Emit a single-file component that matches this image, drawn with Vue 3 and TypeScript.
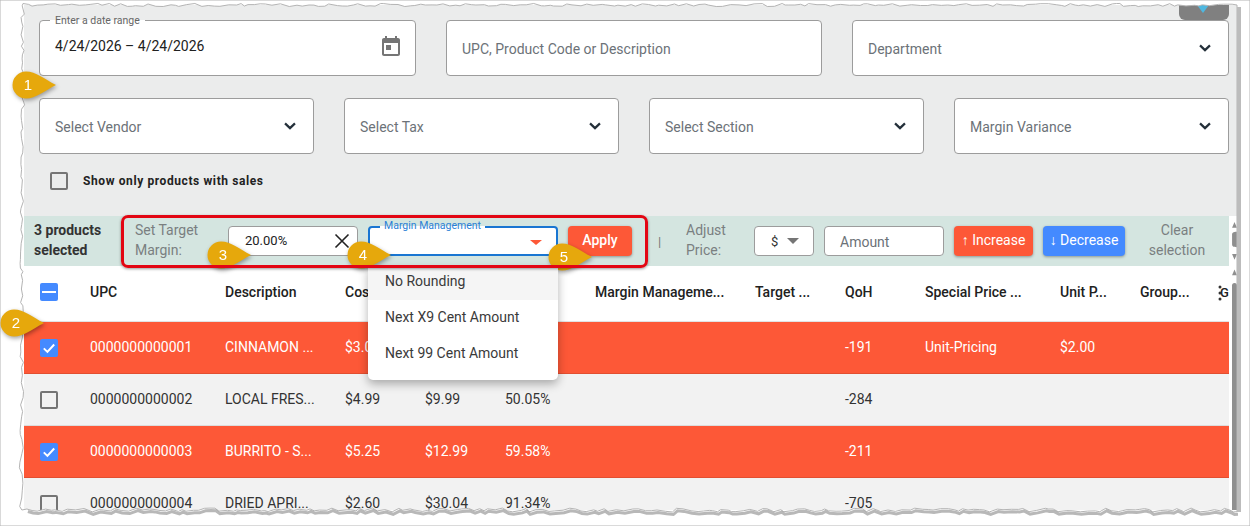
<script setup lang="ts">
interface Row {
  upc: string
  desc: string
  cost: string
  retail: string
  margin: string
  qoh: string
  special: string
  unit: string
  checked: boolean
}

const rows: Row[] = [
  { upc: '0000000000001', desc: 'CINNAMON ...', cost: '$3.00', retail: '', margin: '', qoh: '-191', special: 'Unit-Pricing', unit: '$2.00', checked: true },
  { upc: '0000000000002', desc: 'LOCAL FRES...', cost: '$4.99', retail: '$9.99', margin: '50.05%', qoh: '-284', special: '', unit: '', checked: false },
  { upc: '0000000000003', desc: 'BURRITO - S...', cost: '$5.25', retail: '$12.99', margin: '59.58%', qoh: '-211', special: '', unit: '', checked: true },
  { upc: '0000000000004', desc: 'DRIED APRI...', cost: '$2.60', retail: '$30.04', margin: '91.34%', qoh: '-705', special: '', unit: '', checked: false },
]

const vendorFilters = ['Select Vendor', 'Select Tax', 'Select Section', 'Margin Variance']
const roundingOptions = ['No Rounding', 'Next X9 Cent Amount', 'Next 99 Cent Amount']

const callouts = [
  { n: 1, x: 12, y: 71 },
  { n: 2, x: 0, y: 309 },
  { n: 3, x: 207, y: 241 },
  { n: 4, x: 347, y: 241 },
  { n: 5, x: 548, y: 243 },
]

// torn paper edge of the screenshot frame
let seed = 11
const rnd = () => {
  seed = (seed * 16807) % 2147483647
  return seed / 2147483647
}
const jag = (x1: number, y1: number, x2: number, y2: number, amp: number) => {
  const pts: string[] = []
  const len = Math.hypot(x2 - x1, y2 - y1)
  let d = 0
  while (d < len) {
    const t = d / len
    const off = (rnd() - 0.5) * amp
    const px = x1 + (x2 - x1) * t + (y1 === y2 ? 0 : off)
    const py = y1 + (y2 - y1) * t + (y1 === y2 ? off : 0)
    pts.push(`${px.toFixed(1)} ${py.toFixed(1)}`)
    d += 3 + rnd() * 6
  }
  return pts
}
const topEdge = jag(23, 5, 1237, 5, 3)
const bottomEdge = jag(1237, 510, 21, 510, 4)
const leftEdge = jag(21, 510, 23, 5, 4)
const edgePath = `M${[...topEdge, '1237 5', '1237 510', ...bottomEdge, ...leftEdge].join(' L')} Z`
const maskPath = `M0 0 H1250 V526 H0 Z ${edgePath}`
const bottomShadow = `M${bottomEdge.join(' L')}`
</script>

<template>
  <div class="page">
    <div class="shot">
      <div class="tab"><span class="tab-arrow"></span></div>

      <section class="filters">
        <div class="row-three">
          <div class="field outlined">
            <span class="legend">Enter a date range</span>
            <span class="date">4/24/2026 – 4/24/2026</span>
            <svg class="calendar" viewBox="0 0 24 24" width="24" height="24">
              <path fill="#757575" d="M19 3h-1V1h-2v2H8V1H6v2H5c-1.11 0-1.99.9-1.99 2L3 19c0 1.1.89 2 2 2h14c1.1 0 2-.9 2-2V5c0-1.1-.9-2-2-2zm0 16H5V8h14v11zM7 10h5v5H7z" />
            </svg>
          </div>
          <div class="field"><span class="placeholder">UPC, Product Code or Description</span></div>
          <div class="field">
            <span class="placeholder">Department</span>
            <svg class="chevron" viewBox="0 0 14 9" width="12" height="8"><path d="M1.200 1.400 7 7l5.800-5.600" /></svg>
          </div>
        </div>
        <div class="row-four">
          <div v-for="f in vendorFilters" :key="f" class="field">
            <span class="placeholder">{{ f }}</span>
            <svg class="chevron" viewBox="0 0 14 9" width="12" height="8"><path d="M1.200 1.400 7 7l5.800-5.600" /></svg>
          </div>
        </div>
        <label class="sales-check">
          <span class="box"></span>
          <span>Show only products with sales</span>
        </label>
      </section>

      <div class="lower">
        <div class="lower-main">
          <div class="toolbar">
            <div class="selected">3 products selected</div>
            <div class="tool-label target-label">Set Target Margin:</div>
            <div class="input margin-input">
              <span>20.00%</span>
              <svg viewBox="0 0 16 16" width="16" height="16"><path d="M1.500 1.500l13 13M14.500 1.500l-13 13" /></svg>
            </div>
            <div class="rounding">
              <span class="rounding-label">Margin Management</span>
              <span class="caret"></span>
              <ul class="menu">
                <li v-for="(o, i) in roundingOptions" :key="o" :class="{ active: i === 0 }">{{ o }}</li>
              </ul>
            </div>
            <button class="btn apply">Apply</button>
            <span class="pipe">|</span>
            <div class="tool-label adjust-label">Adjust Price:</div>
            <div class="input unit-select"><span>$</span><span class="caret grey"></span></div>
            <div class="input amount">Amount</div>
            <button class="btn increase"><i>↑</i> Increase</button>
            <button class="btn decrease"><i>↓</i> Decrease</button>
            <div class="tool-label clear">Clear selection</div>
            <div class="highlight"></div>
          </div>

          <div class="grid-row head">
            <div class="cell-check"><span class="cb on"><span class="minus"></span></span></div>
            <div>UPC</div>
            <div>Description</div>
            <div>Cost</div>
            <div></div>
            <div></div>
            <div>Margin Manageme...</div>
            <div>Target ...</div>
            <div>QoH</div>
            <div>Special Price ...</div>
            <div>Unit P...</div>
            <div>Group...</div>
            <div class="last-col">
              <span>G</span>
              <svg viewBox="0 0 4 16" width="4" height="16"><circle cx="2" cy="2" r="1.500" /><circle cx="2" cy="8" r="1.500" /><circle cx="2" cy="14" r="1.500" /></svg>
            </div>
          </div>

          <div v-for="r in rows" :key="r.upc" class="grid-row item" :class="{ picked: r.checked }">
            <div class="cell-check">
              <span class="cb" :class="{ on: r.checked }">
                <svg v-if="r.checked" viewBox="0 0 18 18" width="18" height="18"><path d="M3.800 9.400l3.600 3.500 6.800-7.400" /></svg>
              </span>
            </div>
            <div>{{ r.upc }}</div>
            <div>{{ r.desc }}</div>
            <div>{{ r.cost }}</div>
            <div>{{ r.retail }}</div>
            <div>{{ r.margin }}</div>
            <div></div>
            <div></div>
            <div>{{ r.qoh }}</div>
            <div>{{ r.special }}</div>
            <div>{{ r.unit }}</div>
            <div></div>
            <div></div>
          </div>
        </div>

        <div class="gutter">
          <svg viewBox="0 0 5 58" width="5" height="58">
            <path fill="#8f8f8f" d="M2.500 0 5 6H0zM0 13c0-2 1-3 5-3v16c-4 0-5-1-5-3zM0 33h5l-2.500 6zM2.500 49 5 55H0z" />
          </svg>
          <div class="thumb"></div>
        </div>
      </div>
    </div>

    <svg class="torn" viewBox="0 0 1250 526" width="1250" height="526">
      <path :d="maskPath" fill="#fff" fill-rule="evenodd" stroke="#b4b4b4" stroke-width="1" />
      <path :d="bottomShadow" transform="translate(1 2.500)" fill="none" stroke="#9a9a9a" stroke-width="3" stroke-opacity=".7" />
      <path d="M1239 7V512" stroke="#bcbcbc" stroke-width="4" />
    </svg>

    <div v-for="c in callouts" :key="c.n" class="callout" :style="{ left: c.x + 'px', top: c.y + 'px' }">
      <svg viewBox="0 0 44 28" width="44" height="28">
        <path fill="#e6a80c" d="M14 .5C24 .5 32 8 44 14 32 20 24 27.500 14 27.500A13.500 13.500 0 0 1 14 .5z" />
      </svg>
      <span>{{ c.n }}</span>
    </div>
  </div>
</template>

<style scoped>
.page {
  position: relative;
  width: 1250px;
  height: 526px;
  overflow: hidden;
  background: #fff;
  font-family: Roboto, 'Liberation Sans', sans-serif;
  color: #212121;
}

.shot {
  position: relative;
  width: 1213px;
  height: 505px;
  margin-left: 24px;
  top: 5px;
  background: #ebecec;
  overflow: hidden;
}

.tab {
  position: absolute;
  top: 0;
  left: 1155px;
  width: 50px;
  height: 15px;
  background: #808080;
  border-radius: 0 0 6px 6px;
}

.tab-arrow {
  position: absolute;
  left: 18px;
  top: 0;
  border: 6px solid transparent;
  border-top: 8px solid #4fb8e0;
  border-bottom: 0;
}

.filters {
  padding: 15px 8px 0 15px;
}

.row-three {
  display: grid;
  grid-template-columns: 377px 376px 377px;
  gap: 30px;
}

.row-four {
  display: grid;
  grid-template-columns: repeat(4, 275px);
  gap: 30px;
  margin-top: 22px;
}

.field {
  position: relative;
  display: flex;
  align-items: center;
  justify-content: space-between;
  height: 56px;
  box-sizing: border-box;
  padding: 2px 17px 0 15px;
  background: #fff;
  border: 1px solid #9c9c9c;
  border-radius: 4px;
}

.outlined {
  padding-top: 0;
  padding-bottom: 2px;
}

.legend {
  position: absolute;
  top: -7px;
  left: 10px;
  padding: 0 5px;
  font-size: 10.500px;
  line-height: 13px;
  color: #666;
  background: linear-gradient(#ebecec 50%, #fff 50%);
}

.date {
  font-size: 14px;
  color: #212121;
  margin-bottom: 3px;
}

.calendar {
  margin-right: -5px;
}

.placeholder {
  font-size: 14px;
  color: #6c7278;
}

.chevron {
  fill: none;
  stroke: #24303a;
  stroke-width: 2.600;
  margin-top: -3px;
}

.sales-check {
  display: flex;
  align-items: center;
  margin: 18px 0 26px 11px;
  font-size: 12px;
  letter-spacing: 0.6px;
  font-weight: 700;
  color: #222;
  height: 18px;
}

.box {
  width: 18px;
  height: 18px;
  box-sizing: border-box;
  border: 2px solid #757575;
  border-radius: 2px;
  margin-right: 15px;
}

.lower {
  display: flex;
  background: #fff;
  height: 300px;
}

.lower-main {
  width: 1205px;
  flex: none;
}

.gutter {
  padding: 6px 0 0 3px;
  display: flex;
  flex-direction: column;
  gap: 5px;
}

.thumb {
  width: 5px;
  height: 240px;
  background: #8f8f8f;
  border-radius: 3px 3px 0 0;
}

.toolbar {
  position: relative;
  display: flex;
  align-items: center;
  height: 50px;
  padding-left: 10px;
  background: #d4e5e0;
  box-sizing: border-box;
}

.selected {
  width: 101px;
  flex: none;
  font-size: 14px;
  font-weight: 700;
  line-height: 20px;
  color: #333;
  padding: 0 28px 2px 0;
  box-sizing: border-box;
}

.tool-label {
  flex: none;
  font-size: 14px;
  line-height: 20px;
  color: #7a7f80;
  box-sizing: border-box;
  padding-bottom: 2px;
}

.target-label {
  width: 93px;
  padding-right: 20px;
}

.adjust-label {
  width: 68px;
  padding-right: 20px;
}

.input {
  flex: none;
  display: flex;
  align-items: center;
  justify-content: space-between;
  height: 30px;
  box-sizing: border-box;
  background: #fff;
  border: 1px solid #9c9c9c;
  border-radius: 4px;
  font-size: 13px;
}

.margin-input {
  width: 130px;
  padding: 0 7px 1px 16px;
  color: #222;
}

.margin-input svg {
  fill: none;
  stroke: #222;
  stroke-width: 1.600;
}

.rounding {
  position: relative;
  flex: none;
  width: 190px;
  height: 30px;
  margin-left: 10px;
  box-sizing: border-box;
  background: #fff;
  border: 2px solid #1976d2;
  border-radius: 4px;
}

.rounding-label {
  position: absolute;
  top: -9px;
  left: 10px;
  padding: 0 4px;
  font-size: 10.500px;
  line-height: 13px;
  color: #2a7fd6;
  background: linear-gradient(#d4e5e0 50%, #fff 50%);
}

.caret {
  position: absolute;
  right: 14px;
  top: 12px;
  border: 6.500px solid transparent;
  border-top: 5px solid #fd5837;
  border-bottom: 0;
}

.caret.grey {
  position: static;
  border-top-color: #757575;
  border-width: 6px 6px 0;
}

.menu {
  position: absolute;
  top: 38px;
  left: -2px;
  z-index: 3;
  width: 190px;
  height: 114px;
  margin: 0;
  padding: 0;
  list-style: none;
  background: #fff;
  border-radius: 0 0 5px 5px;
  box-shadow: 0 4px 10px rgba(0, 0, 0, 0.3);
  font-size: 14px;
  color: #3a3a3a;
}

.menu li {
  height: 36px;
  line-height: 34px;
  padding-left: 17px;
}

.menu li.active {
  height: 34px;
  line-height: 30px;
  background: #f5f5f5;
}

.btn {
  flex: none;
  height: 30px;
  margin: 0 0 0 10px;
  padding: 0 0 2px;
  border: 0;
  border-radius: 4px;
  font-family: inherit;
  font-size: 14px;
  font-weight: 500;
  color: #fff;
  box-shadow: 0 1px 3px rgba(0, 0, 0, 0.35);
}

.btn i {
  font-style: normal;
  font-weight: 400;
}

.apply {
  width: 64px;
  background: #fd5837;
}

.pipe {
  flex: none;
  width: 28px;
  margin-left: 26px;
  font-size: 13px;
  color: #777;
}

.unit-select {
  width: 60px;
  padding: 0 14px 0 16px;
  color: #333;
}

.amount {
  width: 120px;
  margin-left: 10px;
  padding: 1px 0 0 15px;
  font-size: 14px;
  color: #6c7278;
}

.increase {
  width: 79px;
  background: #fd5837;
  font-weight: 400;
}

.decrease {
  width: 82px;
  background: #448aff;
  font-weight: 400;
}

.clear {
  width: 104px;
  text-align: center;
  padding: 0 20px 2px;
}

.highlight {
  position: absolute;
  z-index: 4;
  left: 97px;
  top: -1px;
  width: 527px;
  height: 53px;
  box-sizing: border-box;
  border: 3px solid #e30613;
  border-radius: 7px;
  box-shadow: 0 1px 3px rgba(0, 0, 0, 0.4);
  pointer-events: none;
}

.grid-row {
  display: grid;
  grid-template-columns: 66px 135px 120px 80px 80px 90px 160px 90px 80px 135px 80px 80px 9px;
  align-items: center;
  font-size: 14px;
  white-space: nowrap;
  overflow: hidden;
}

.head {
  height: 56px;
  padding-bottom: 3px;
  font-weight: 500;
  color: #212121;
  border-bottom: 1px solid #e2e2e2;
  box-sizing: border-box;
}

.item {
  height: 52px;
  padding-bottom: 2px;
  box-sizing: border-box;
  background: #f2f2f2;
  border-bottom: 1px solid #dcdcdc;
  color: #333;
}

.item .cell-check {
  margin-top: 2px;
}

.picked {
  background: #fd5837;
  color: #fff;
  border-bottom-color: #e24f31;
}

.cell-check {
  padding-left: 16px;
  display: flex;
}

.cb {
  display: flex;
  align-items: center;
  justify-content: center;
  width: 18px;
  height: 18px;
  box-sizing: border-box;
  border: 2px solid #757575;
  border-radius: 2px;
}

.cb.on {
  background: #448aff;
  border: 0;
}

.cb svg {
  fill: none;
  stroke: #fff;
  stroke-width: 2;
}

.minus {
  width: 14px;
  height: 2px;
  background: #fff;
}

.last-col {
  position: relative;
  font-size: 13px;
}

.last-col svg {
  position: absolute;
  left: -2px;
  top: 0;
  fill: #333;
}

.torn {
  position: absolute;
  top: 0;
  left: 0;
  pointer-events: none;
}

.callout {
  position: absolute;
  width: 44px;
  height: 28px;
  filter: drop-shadow(1px 2px 2px rgba(0, 0, 0, 0.35));
}

.callout svg {
  display: block;
}

.callout span {
  position: absolute;
  left: 8px;
  top: 0;
  width: 16px;
  text-align: center;
  font-family: 'Liberation Sans', Arial, sans-serif;
  font-size: 15px;
  line-height: 28px;
  color: #fff;
}
</style>
